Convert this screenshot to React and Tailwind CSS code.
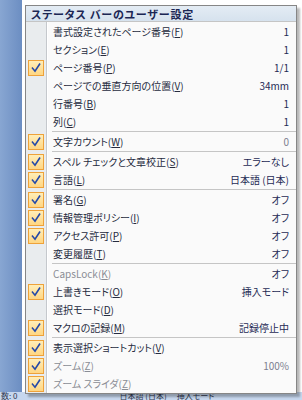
import React from "react";

const items = [
  { label: "書式設定されたページ番号", k: "F", value: "1" },
  { label: "セクション", k: "E", value: "1" },
  { label: "ページ番号", k: "P", value: "1/1", checked: true },
  { label: "ページでの垂直方向の位置", k: "V", value: "34mm" },
  { label: "行番号", k: "B", value: "1" },
  { label: "列", k: "C", value: "1" },
  { sep: true },
  { label: "文字カウント", k: "W", value: "0", checked: true, grayValue: true },
  { sep: true },
  { label: "スペル チェックと文章校正", k: "S", value: "エラーなし", checked: true },
  { label: "言語", k: "L", value: "日本語 (日本)", checked: true },
  { sep: true },
  { label: "署名", k: "G", value: "オフ", checked: true },
  { label: "情報管理ポリシー", k: "I", value: "オフ", checked: true },
  { label: "アクセス許可", k: "P", value: "オフ", checked: true },
  { label: "変更履歴", k: "T", value: "オフ" },
  { sep: true },
  { label: "CapsLock", k: "K", value: "オフ", disabled: true },
  { label: "上書きモード", k: "O", value: "挿入モード", checked: true },
  { label: "選択モード", k: "D" },
  { label: "マクロの記録", k: "M", value: "記録停止中", checked: true },
  { sep: true },
  { label: "表示選択ショートカット", k: "V", checked: true },
  { label: "ズーム", k: "Z", value: "100%", checked: true, disabled: true, grayValue: true },
  { label: "ズーム スライダ", k: "Z", checked: true, disabled: true },
];

function Gutter({ children, h }) {
  return (
    <div className={`flex ${h}`}>
      <div className="w-[20px] bg-[#e9ecee] flex items-center pl-[2px]">{children}</div>
      <div className="w-px bg-[#c5c8cc]" />
      <div className="w-px bg-white" />
    </div>
  );
}

function Check() {
  return (
    <div className="w-[16px] h-[16px] border border-[#eea23a] bg-gradient-to-b from-[#ffeeb8] to-[#ffd682] flex items-center justify-center">
      <svg width="10" height="10" viewBox="0 0 10 10">
        <path d="M1.5 5.2 L4 8.2 L8.6 1.2" fill="none" stroke="#2449a8" strokeWidth="1.6" strokeLinecap="square" />
      </svg>
    </div>
  );
}

function Row({ it }) {
  if (it.sep) {
    return (
      <div className="flex h-[2px]">
        <Gutter h="h-[2px]" />
        <div className="flex-1 pl-[4px]">
          <div className="h-px bg-[#c5c5c5]" />
        </div>
      </div>
    );
  }
  const labelColor = it.disabled ? "text-[#8a8d95]" : "text-[#262b3e]";
  return (
    <div className="flex h-[18px]">
      <Gutter h="h-[18px]">{it.checked ? <Check /> : null}</Gutter>
      <div className="flex-1 flex items-center justify-between pl-[5px] pr-[7px]">
        <span className={labelColor}>
          {it.label}(<u>{it.k}</u>)
        </span>
        {it.value ? (
          <span className={it.grayValue ? "text-[#7c8090]" : "text-[#1f2a55]"}>{it.value}</span>
        ) : null}
      </div>
    </div>
  );
}

export default function App() {
  return (
    <div
      className="relative w-[302px] h-[400px] overflow-hidden bg-white text-[10px] leading-[18px] [font-feature-settings:'palt']"
      style={{ fontFamily: '"Noto Sans CJK JP", "Noto Sans", sans-serif' }}
    >
      <div className="flex flex-col h-full">
        <div className="flex flex-1">
          <div className="w-[22px] bg-gradient-to-r from-[#88a6d2] to-[#6c8ec2]" />
          <div className="flex-1 bg-white" />
        </div>
        <div className="h-[8px] bg-[#c6d7ee] flex items-start text-[8px] leading-[8px] text-[#303850]">
          <span className="pl-[1px]">数: 0</span>
          <span className="pl-[102px]">日本語 (日本)</span>
          <span className="pl-[10px]">挿入モード</span>
        </div>
      </div>

      <div className="absolute left-[25px] top-[5px] w-[272px] border border-[#868686] bg-[#fafafa] shadow-[3px_3px_2px_rgba(0,0,0,0.28)]">
        <div className="h-[16px] bg-gradient-to-b from-[#e4ecf4] to-[#d6e2ee] border-b border-[#c5c5c5] flex items-center pl-[5px] font-bold text-[#1b2654] text-[11px] tracking-[0.8px]">
          ステータス バーのユーザー設定
        </div>
        <div className="flex h-px">
          <Gutter h="h-px" />
          <div className="flex-1" />
        </div>
        {items.map((it, i) => (
          <Row key={i} it={it} />
        ))}
      </div>
    </div>
  );
}
